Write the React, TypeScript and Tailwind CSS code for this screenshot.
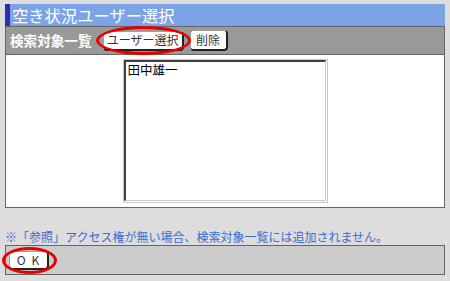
import React from "react";

const font = { fontFamily: '"Noto Sans CJK JP", "Noto Sans", sans-serif' };

function Btn({ children, className = "" }: { children: React.ReactNode; className?: string }) {
  return (
    <div
      className={
        "flex items-center justify-center bg-white rounded-[4px] border border-t-[#a0a0a0] border-l-[#a0a0a0] border-r-[#222] border-b-[#222] border-r-2 border-b-2 text-[12px] leading-none text-[#333] " +
        className
      }
    >
      {children}
    </div>
  );
}

export default function App() {
  return (
    <div className="w-[450px] h-[281px] bg-[#dddddd] pt-[4px] px-[5px] overflow-hidden" style={font}>
      <div className="w-[440px] flex flex-col">
        <div className="h-[22px] bg-[#7ba3e6] border-l-[5px] border-[#2530b0] flex items-center pl-[2px] text-white text-[16.3px] leading-none">
          空き状況ユーザー選択
        </div>
        <div className="h-[29px] bg-[#999999] border border-[#666] flex items-center pl-[4px]">
          <span className="text-white font-bold text-[13.6px] leading-none">検索対象一覧</span>
          <div className="relative ml-[11px]">
            <Btn className="w-[81px] h-[20px]">ユーザー選択</Btn>
            <div className="absolute -left-[7px] -top-[5px] w-[95px] h-[29px] rounded-[50%] border-[3px] border-[#e60000]" />
          </div>
          <Btn className="ml-[6px] w-[38px] h-[21px]">削除</Btn>
        </div>
        <div className="h-[153px] bg-white border-x border-b border-[#666] flex justify-center pt-[4px]">
          <div className="w-[205px] h-[144px] border border-[#c8c8c8] pr-[1px] pb-[1px] bg-white">
            <div className="w-full h-full border-t-2 border-l-2 border-r border-b border-t-[#404040] border-l-[#404040] border-r-[#c8c8c8] border-b-[#c8c8c8] pl-[2px] pt-[1px] text-[12.5px] leading-[14px] text-black">
              田中雄一
            </div>
          </div>
        </div>
        <div className="mt-[20px] h-[17px] text-[12px] leading-[17px] text-[#3a6ad6] whitespace-nowrap">
          ※「参照」アクセス権が無い場合、検索対象一覧には追加されません。
        </div>
        <div className="h-[30px] bg-[#cccccc] border border-[#666] flex items-center pl-[3px]">
          <div className="relative">
            <Btn className="w-[40px] h-[19px] tracking-[6px] pl-[5px]">OK</Btn>
            <div className="absolute -left-[7px] -top-[4px] w-[55px] h-[27px] rounded-[50%] border-[3px] border-[#e60000]" />
          </div>
        </div>
      </div>
    </div>
  );
}
